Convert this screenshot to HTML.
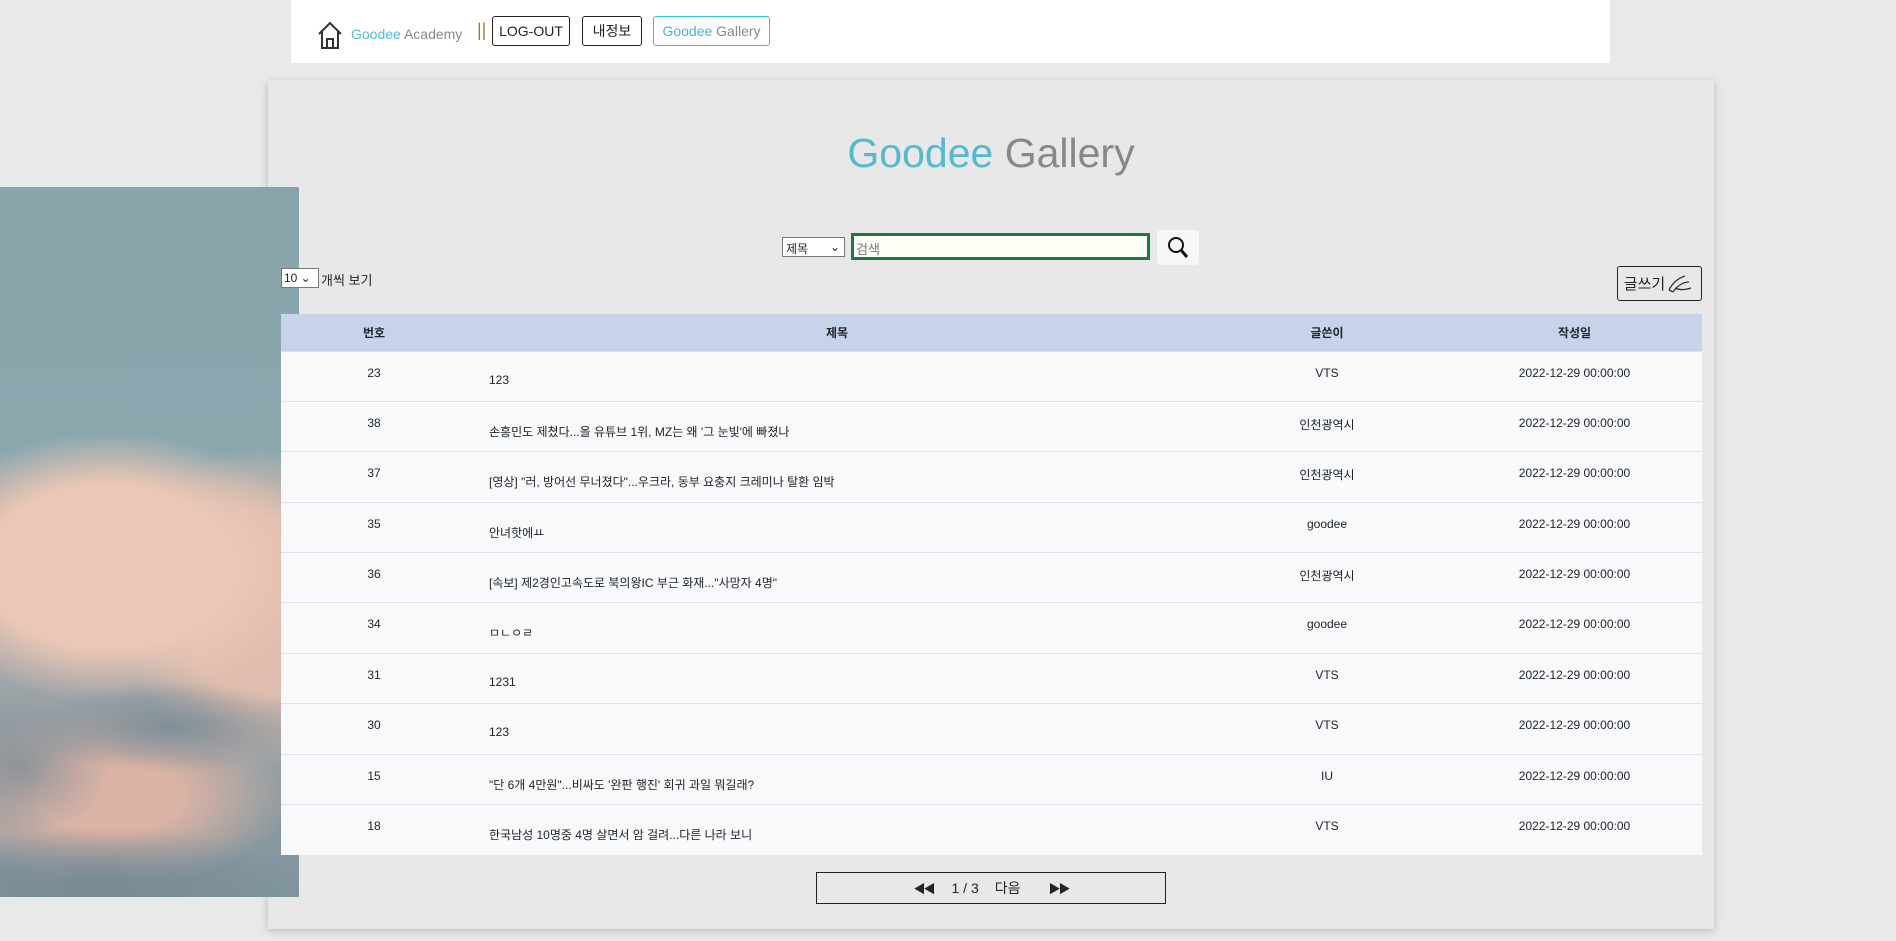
<!DOCTYPE html>
<html><head><meta charset="utf-8"><style>
*{box-sizing:border-box;margin:0;padding:0}
body{width:1896px;height:941px;background:#e9e9e9;font-family:"Liberation Sans","Noto Sans CJK KR",sans-serif;position:relative;overflow:hidden;color:#212529}
.top{position:absolute;left:291px;top:0;width:1319px;height:63px;background:#fff}
.panel{position:absolute;left:268px;top:80px;width:1446px;height:849px;background:#e8e8e8;box-shadow:0 2px 8px rgba(0,0,0,.2)}
.img{position:absolute;left:0;top:187px;width:299px;height:710px;
background:
radial-gradient(ellipse 150px 45px at 170px 540px,rgba(128,142,152,.95),transparent),
radial-gradient(ellipse 90px 70px at 20px 580px,rgba(128,142,152,.8),transparent),
radial-gradient(ellipse 200px 60px at 100px 700px,rgba(120,138,148,1),transparent),
radial-gradient(ellipse 230px 150px at 110px 380px,#eac7b6 55%,transparent 90%),
radial-gradient(ellipse 150px 180px at 260px 420px,#e0bdae 50%,transparent 90%),
radial-gradient(ellipse 180px 90px at 110px 610px,#dab3a5 40%,transparent),
linear-gradient(#88a5ac 0,#8aa7ae 38%,#a8a9aa 60%,#7f949e 100%)}
.btn{position:absolute;border:1px solid #222;border-radius:3px;font-size:14px;display:flex;align-items:center;justify-content:center}
th,td{font-size:12px;font-weight:normal}
table{position:absolute;left:281px;top:314px;width:1421px;border-collapse:collapse}
th{background:#c7d2eb;height:37px;font-weight:bold;font-size:12px}
td{background:#f8f9fa;height:50.4px;border-top:1px solid #dee2e6;vertical-align:top}
td.c{text-align:center;padding-top:14px}
td.t{padding-top:21px;padding-left:22px}
</style></head><body>
<div class="top">
<svg style="position:absolute;left:25px;top:19px" width="28" height="32" viewBox="0 0 28 32"><path d="M3 15 L14 4 L25 15 M6 12 V29 H22 V12 M11 29 V20 H17 V29" fill="none" stroke="#333" stroke-width="2"/></svg>
<span style="position:absolute;left:60px;top:26px;font-size:14px"><span style="color:#4fbcd4">Goodee</span> <span style="color:#888">Academy</span></span>
<span style="position:absolute;left:186px;top:20px;font-size:18px;color:#a57a38">||</span>
<div class="btn" style="left:201px;top:16px;width:78px;height:30px">LOG-OUT</div>
<div class="btn" style="left:291px;top:16px;width:60px;height:30px">내정보</div>
<div class="btn" style="left:362px;top:16px;width:117px;height:30px;border-color:#2bc0e0;color:#4fb5cc"><span>Goodee <span style="color:#888">Gallery</span></span></div>
</div>
<div class="panel">
<div style="position:absolute;left:0;width:100%;top:50px;text-align:center;font-size:41px"><span style="color:#55b9cf">Goodee</span> <span style="color:#888">Gallery</span></div>
<div style="position:absolute;left:514px;top:157px;width:63px;height:20px;background:#fff;border:1px solid #777;font-size:12px;padding:2px 3px">제목<span style="position:absolute;right:4px">⌄</span></div>
<div style="position:absolute;left:583px;top:153px;width:299px;height:27px;background:#fffff8;border:3px solid #1a7a4e;font-size:13px;color:#777;padding:3px 2px">검색</div>
<div style="position:absolute;left:889px;top:150px;width:42px;height:35px;background:#f6f6f8;border-radius:3px"><svg width="42" height="35"><circle cx="19" cy="15" r="7" fill="none" stroke="#111" stroke-width="2"/><path d="M24 20 L30 27" stroke="#111" stroke-width="3"/></svg></div>
<div style="position:absolute;left:1349px;top:186px;width:85px;height:35px;font-size:15px" class="btn">글쓰기<svg width="30" height="24" viewBox="0 0 30 24"><path d="M4 18 C8 10 14 6 20 4 M8 20 C12 14 18 10 24 10 M4 18 L8 20 M10 16 C14 18 20 18 26 16" fill="none" stroke="#333" stroke-width="1.3"/></svg></div>
</div>
<div class="img"></div>
<div style="position:absolute;left:281px;top:268px;width:38px;height:20px;background:#fff;border:1px solid #777;font-size:12px;padding:2px;z-index:2">10 ⌄</div>
<span style="position:absolute;left:321px;top:270px;font-size:13px;z-index:2">개씩 보기</span>
<table>
<tr><th style="width:186px">번호</th><th>제목</th><th style="width:240px">글쓴이</th><th style="width:255px">작성일</th></tr>
<tr><td class="c">23</td><td class="t">123</td><td class="c">VTS</td><td class="c">2022-12-29 00:00:00</td></tr>
<tr><td class="c">38</td><td class="t">손흥민도 제쳤다...올 유튜브 1위, MZ는 왜 '그 눈빛'에 빠졌나</td><td class="c">인천광역시</td><td class="c">2022-12-29 00:00:00</td></tr>
<tr><td class="c">37</td><td class="t">[영상] "러, 방어선 무너졌다"...우크라, 동부 요충지 크레미나 탈환 임박</td><td class="c">인천광역시</td><td class="c">2022-12-29 00:00:00</td></tr>
<tr><td class="c">35</td><td class="t">안녀핫에ㅛ</td><td class="c">goodee</td><td class="c">2022-12-29 00:00:00</td></tr>
<tr><td class="c">36</td><td class="t">[속보] 제2경인고속도로 북의왕IC 부근 화재..."사망자 4명"</td><td class="c">인천광역시</td><td class="c">2022-12-29 00:00:00</td></tr>
<tr><td class="c">34</td><td class="t">ㅁㄴㅇㄹ</td><td class="c">goodee</td><td class="c">2022-12-29 00:00:00</td></tr>
<tr><td class="c">31</td><td class="t">1231</td><td class="c">VTS</td><td class="c">2022-12-29 00:00:00</td></tr>
<tr><td class="c">30</td><td class="t">123</td><td class="c">VTS</td><td class="c">2022-12-29 00:00:00</td></tr>
<tr><td class="c">15</td><td class="t">"단 6개 4만원"...비싸도 '완판 행진' 회귀 과일 뭐길래?</td><td class="c">IU</td><td class="c">2022-12-29 00:00:00</td></tr>
<tr><td class="c">18</td><td class="t">한국남성 10명중 4명 살면서 암 걸려...다른 나라 보니</td><td class="c">VTS</td><td class="c">2022-12-29 00:00:00</td></tr>
</table>
<div style="position:absolute;left:816px;top:872px;width:350px;height:32px;border:1.5px solid #222;display:flex;align-items:center;justify-content:center;font-size:14px">
<span style="font-size:12px;letter-spacing:-2px">◀◀</span><span style="margin-left:18px">1 / 3</span><span style="margin-left:16px">다음</span><span style="margin-left:28px;font-size:12px;letter-spacing:-2px">▶▶</span></div>
</body></html>
